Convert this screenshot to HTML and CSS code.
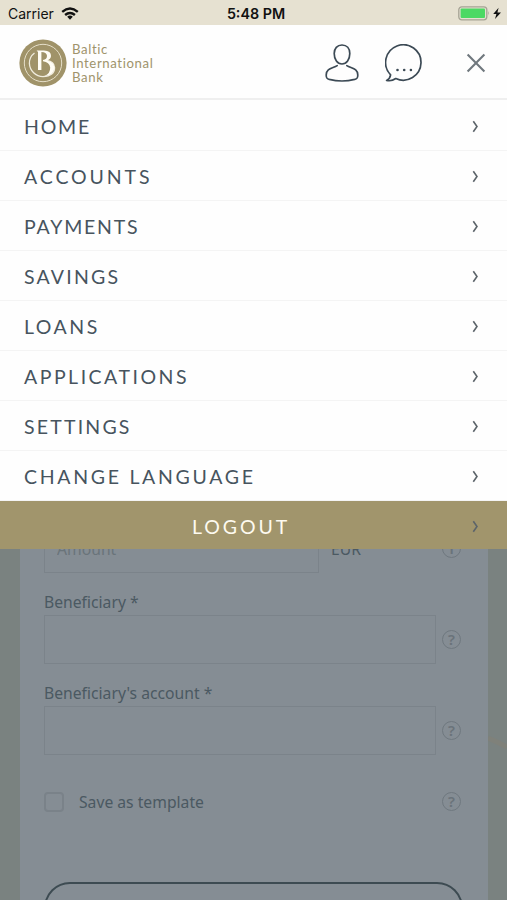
FILE: index.html
```
<!DOCTYPE html>
<html lang="en">
<head>
    <meta charset="UTF-8">
    <meta name="viewport" content="width=device-width, initial-scale=1.0">
    <title>Baltic International Bank</title>
    <link rel="stylesheet" href="styles.css">
</head>
<body>

    <!-- Payment form, dimmed behind the menu -->
    <main class="page">
        <svg class="page-curve" width="19" height="30" viewBox="0 0 19 30"><path d="M0 8 Q10 12 19 17" fill="none" stroke="#7f817a" stroke-width="5"/></svg>
        <form class="card">
            <div class="row amount-row">
                <input class="field amount" type="text" placeholder="Amount">
                <span class="currency">EUR</span>
                <span class="help">i</span>
            </div>
            <label class="label" for="beneficiary">Beneficiary *</label>
            <div class="row">
                <input class="field" type="text" id="beneficiary">
                <span class="help">?</span>
            </div>
            <label class="label" for="account">Beneficiary's account *</label>
            <div class="row">
                <input class="field" type="text" id="account">
                <span class="help">?</span>
            </div>
            <div class="row save-row">
                <span class="checkbox"></span>
                <span class="save-text">Save as template</span>
                <span class="help">?</span>
            </div>
            <div class="submit"></div>
        </form>
    </main>

    <!-- Menu -->
    <div class="menu">
        <div class="status-bar">
            <span class="carrier">Carrier
                <svg width="18" height="13" viewBox="0 0 18 13">
                    <g fill="none" stroke="#111" stroke-width="2.4">
                        <path d="M1.2 4.8 Q9 -1.8 16.8 4.8"/>
                        <path d="M4.1 8 Q9 3.8 13.9 8"/>
                    </g>
                    <path d="M6.2 9.8 Q9 7.4 11.8 9.8 L9 12.8 Z" fill="#111"/>
                </svg>
            </span>
            <span class="time">5:48 PM</span>
            <span class="battery">
                <svg width="44" height="15" viewBox="0 0 44 15">
                    <rect x="0.8" y="0.8" width="28" height="13" rx="3" fill="none" stroke="#a5a394" stroke-width="1.3"/>
                    <rect x="2.6" y="2.6" width="24.4" height="9.4" rx="1" fill="#4cd964"/>
                    <path d="M30.3 5 Q32 7.3 30.3 9.6 Z" fill="#a5a394"/>
                    <path d="M40.6 1.8 L35.2 8 H38.4 L37 13 L43 6.4 H39.4 Z" fill="#111"/>
                </svg>
            </span>
        </div>

        <header class="header">
            <svg class="logo" width="48" height="48" viewBox="0 0 48 48">
                <circle cx="24" cy="24" r="23.6" fill="#a09369"/>
                <circle cx="24" cy="24" r="18.7" fill="none" stroke="#e6dfc9" stroke-width="1"/>
                <path d="M15.5 14 Q10.2 18 10.4 24.5 A13.8 13.8 0 0 0 24 37.6 Q35.6 37 35.6 28.5 Q35 22.5 28 21.5" fill="none" stroke="#f0ecdd" stroke-width="1.3"/>
                <path d="M17.6 11.4 H25 Q32.2 11.8 32 17 Q31.8 20.4 28 21.6 Q35.5 23.5 35.4 29 Q34.6 36.4 25.5 37 Q31.4 34.6 31.2 28.5 Q30.4 23 24 22.2 V21 Q28 20.5 28 16.8 Q27.6 13.2 22.4 13 V31 H19 V13 Z" fill="#fffdf5"/>
            </svg>
            <div class="brand">
                <span>Baltic</span>
                <span>International</span>
                <span>Bank</span>
            </div>
            <svg class="icon-user" width="34" height="38" viewBox="0 0 34 38">
                <g fill="none" stroke="#3c4a55" stroke-width="1.7" stroke-linecap="round" stroke-linejoin="round">
                    <path d="M17 1 C21.8 1 24.8 4.3 24.8 9.6 C24.8 15.6 21.6 20 17 20 C12.4 20 9.2 15.6 9.2 9.6 C9.2 4.3 12.2 1 17 1 Z"/>
                    <path d="M12.2 21.6 C8 24.4 1.2 24 1.2 31 C1.2 33.6 1.5 34.6 4.3 35.4 Q17 38.6 29.7 35.4 C32.5 34.6 32.8 33.6 32.8 31 C32.8 24 26 24.4 21.8 21.6"/>
                </g>
            </svg>
            <svg class="icon-chat" width="38" height="38" viewBox="0 0 38 38">
                <path d="M5.6 30.8 A17.7 17.7 0 1 1 10.8 34.5 Q6.5 37.6 1.6 36.4 Q5 34.8 5.6 30.8 Z" fill="none" stroke="#3c4a55" stroke-width="1.7" stroke-linejoin="round"/>
                <g fill="#3c4a55"><circle cx="12.5" cy="26" r="1.3"/><circle cx="19.2" cy="26" r="1.3"/><circle cx="25.9" cy="26" r="1.3"/></g>
            </svg>
            <svg class="icon-close" width="20" height="20" viewBox="0 0 20 20"><path d="M1.6 1.6 L18.4 18.4 M18.4 1.6 L1.6 18.4" stroke="#70787e" stroke-width="2.1"/></svg>
        </header>

        <nav class="nav">
            <a class="nav-item home">HOME <svg class="arrow" viewBox="0 0 7 13"><path d="M1.3 1.2 L5 6.5 L1.3 11.8"/></svg></a>
            <a class="nav-item accounts">ACCOUNTS <svg class="arrow" viewBox="0 0 7 13"><path d="M1.3 1.2 L5 6.5 L1.3 11.8"/></svg></a>
            <a class="nav-item payments">PAYMENTS <svg class="arrow" viewBox="0 0 7 13"><path d="M1.3 1.2 L5 6.5 L1.3 11.8"/></svg></a>
            <a class="nav-item savings">SAVINGS <svg class="arrow" viewBox="0 0 7 13"><path d="M1.3 1.2 L5 6.5 L1.3 11.8"/></svg></a>
            <a class="nav-item loans">LOANS <svg class="arrow" viewBox="0 0 7 13"><path d="M1.3 1.2 L5 6.5 L1.3 11.8"/></svg></a>
            <a class="nav-item applications">APPLICATIONS <svg class="arrow" viewBox="0 0 7 13"><path d="M1.3 1.2 L5 6.5 L1.3 11.8"/></svg></a>
            <a class="nav-item settings">SETTINGS <svg class="arrow" viewBox="0 0 7 13"><path d="M1.3 1.2 L5 6.5 L1.3 11.8"/></svg></a>
            <a class="nav-item language">CHANGE LANGUAGE <svg class="arrow" viewBox="0 0 7 13"><path d="M1.3 1.2 L5 6.5 L1.3 11.8"/></svg></a>
            <a class="nav-item logout"><span class="logout-text">LOGOUT</span> <svg class="arrow" viewBox="0 0 7 13"><path d="M1.3 1.2 L5 6.5 L1.3 11.8"/></svg></a>
        </nav>
    </div>

</body>
</html>
```

FILE: styles.css
```
* {
    box-sizing: border-box;
}

body {
    margin: 0;
    font-family: "Noto Sans", sans-serif;
}

.page {
    position: relative;
    height: 900px;
    overflow: hidden;
    padding: 500px 19px 0 20px;
    background-color: #7a8280;
}

.page-curve {
    position: absolute;
    right: 0;
    top: 730px;
}

.card {
    height: 400px;
    padding: 24px 25px 0 24px;
    background-color: #858d94;
    color: #4b5962;
    font-size: 15.7px;
}

.row {
    display: flex;
    align-items: center;
    height: 49px;
}

.field {
    width: 392px;
    height: 49px;
    padding: 0 12px;
    border: 1px solid #7b838a;
    background: none;
    font: inherit;
}

.field::placeholder {
    color: #6a747a;
    opacity: 1;
}

.amount {
    width: 275px;
}

.currency {
    margin-left: 12px;
}

.help {
    width: 19px;
    height: 19px;
    margin-left: 6px;
    border: 1.5px solid #6f787f;
    border-radius: 50%;
    color: #6a737a;
    font-size: 15px;
    font-weight: 600;
    line-height: 16px;
    text-align: center;
}

.amount-row .help,
.save-row .help {
    margin-left: auto;
    margin-right: 2px;
}

.label {
    display: block;
    height: 42px;
    padding-top: 17px;
    line-height: 24px;
}

.save-row {
    margin-top: 22px;
}

.checkbox {
    width: 20px;
    height: 20px;
    border: 2px solid #7a8289;
    border-radius: 4px;
}

.save-text {
    margin-left: 15px;
    padding-top: 1px;
}

.submit {
    height: 60px;
    margin-top: 56px;
    border: 2px solid #3d4b52;
    border-radius: 26px;
}

/* Menu lies over the form */
.menu {
    position: absolute;
    top: 0;
    left: 0;
    width: 507px;
    background-color: #fefefe;
}

.status-bar {
    display: grid;
    grid-template-columns: 1fr auto 1fr;
    align-items: center;
    height: 25px;
    padding: 2px 5px 0 8px;
    background-color: #e6e1d1;
    color: #111;
    font-family: Inter, sans-serif;
    font-size: 14px;
}

.carrier {
    display: flex;
    align-items: center;
    gap: 7px;
}

.time {
    margin-left: 2px;
    font-size: 14.3px;
    font-weight: 600;
}

.battery {
    display: flex;
    justify-content: flex-end;
}

.header {
    display: flex;
    align-items: center;
    height: 75px;
    padding: 3px 21px 0 19px;
    border-bottom: 2px solid #efefef;
}

.brand {
    display: flex;
    flex-direction: column;
    width: 90px;
    margin-left: 5px;
    color: #a0946c;
    font-family: Lato, sans-serif;
    font-size: 13.2px;
    line-height: 14px;
    letter-spacing: 0.6px;
}

.icon-user {
    margin-left: 163px;
}

.icon-chat {
    margin-left: 26px;
}

.icon-close {
    margin-left: auto;
}

.nav {
    padding-top: 1px;
}

.nav-item {
    display: flex;
    align-items: center;
    justify-content: space-between;
    height: 50px;
    padding: 1px 28px 0 24px;
    border-bottom: 1px solid #f4f4f4;
    color: #47545e;
    font-family: Lato, sans-serif;
    font-size: 19.5px;
    letter-spacing: 2.2px;
}

.home,
.payments {
    letter-spacing: 1.8px;
}

.accounts {
    letter-spacing: 2.9px;
}

.loans,
.applications {
    letter-spacing: 2.5px;
}

.language {
    letter-spacing: 2.7px;
}

.arrow {
    width: 7px;
    height: 13px;
    fill: none;
    stroke: #5c646a;
    stroke-width: 1.6;
}

.logout {
    height: 48px;
    padding-top: 2px;
    border-bottom: none;
    background-color: #a1956c;
    color: #fdfaf0;
    letter-spacing: 2.9px;
}

.logout-text {
    margin-left: 168px;
}
```
